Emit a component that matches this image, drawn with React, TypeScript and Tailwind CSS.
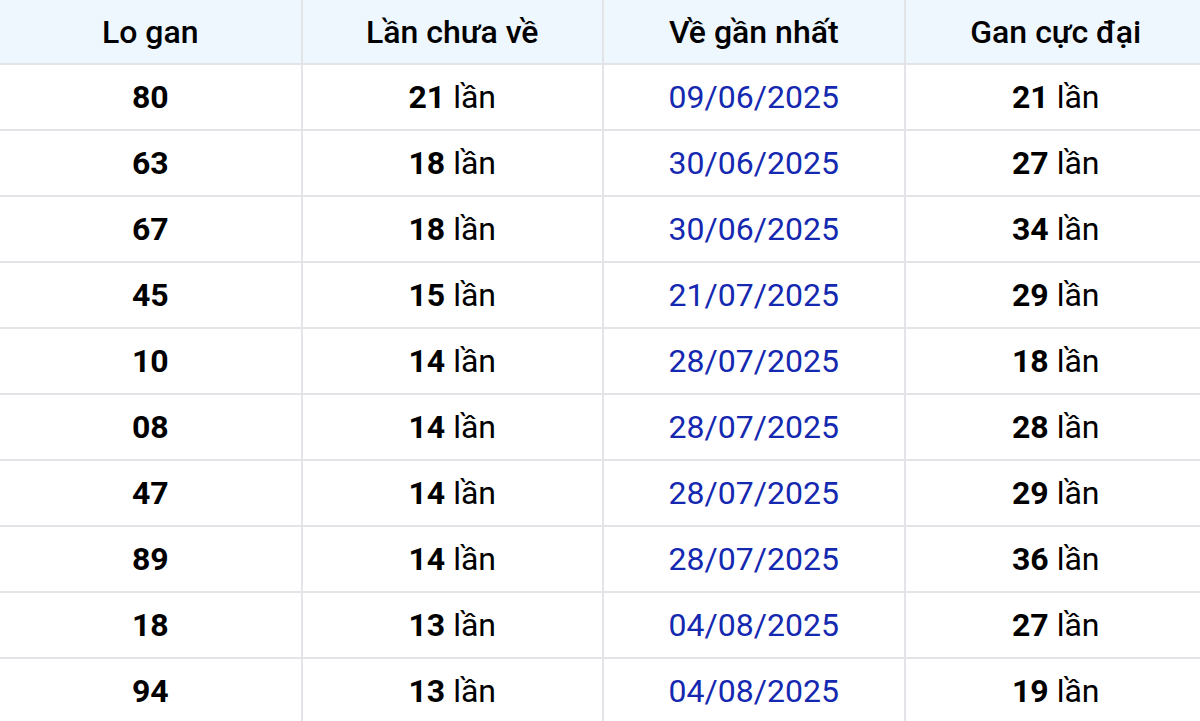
const rows = [
  { lo: '80', chua: 21, ngay: '09/06/2025', max: 21 },
  { lo: '63', chua: 18, ngay: '30/06/2025', max: 27 },
  { lo: '67', chua: 18, ngay: '30/06/2025', max: 34 },
  { lo: '45', chua: 15, ngay: '21/07/2025', max: 29 },
  { lo: '10', chua: 14, ngay: '28/07/2025', max: 18 },
  { lo: '08', chua: 14, ngay: '28/07/2025', max: 28 },
  { lo: '47', chua: 14, ngay: '28/07/2025', max: 29 },
  { lo: '89', chua: 14, ngay: '28/07/2025', max: 36 },
  { lo: '18', chua: 13, ngay: '04/08/2025', max: 27 },
  { lo: '94', chua: 13, ngay: '04/08/2025', max: 19 },
]

export default function App() {
  return (
    <div className="w-[1200px] h-[721px] overflow-hidden bg-white font-['Roboto',sans-serif]">
      <table className="w-[1206px] table-fixed border-collapse text-center text-[32px] text-black">
        <thead>
          <tr className="bg-[#eef6fe]">
            <th className="h-[64px] border-2 border-t-0 border-l-0 border-[#e2e4e8] font-medium">Lo gan</th>
            <th className="h-[64px] border-2 border-t-0 border-[#e2e4e8] font-medium">Lần chưa về</th>
            <th className="h-[64px] border-2 border-t-0 border-[#e2e4e8] font-medium">Về gần nhất</th>
            <th className="h-[64px] border-2 border-t-0 border-r-0 border-[#e2e4e8] font-medium">Gan cực đại</th>
          </tr>
        </thead>
        <tbody>
          {rows.map((r, i) => (
            <tr key={i}>
              <td className="h-[66px] border-2 border-l-0 border-[#e2e4e8] font-bold">{r.lo}</td>
              <td className="h-[66px] border-2 border-[#e2e4e8]">
                <b>{r.chua}</b> lần
              </td>
              <td className="h-[66px] border-2 border-[#e2e4e8] text-[#1428b0]">{r.ngay}</td>
              <td className="h-[66px] border-2 border-r-0 border-[#e2e4e8]">
                <b>{r.max}</b> lần
              </td>
            </tr>
          ))}
        </tbody>
      </table>
    </div>
  )
}
